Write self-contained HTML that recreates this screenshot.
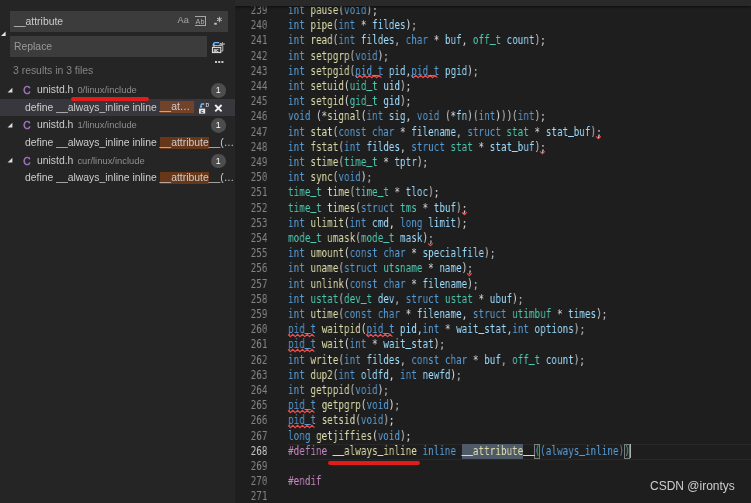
<!DOCTYPE html>
<html><head><meta charset="utf-8"><title>unistd.h</title>
<style>
html,body{margin:0;padding:0;}
body{width:751px;height:503px;overflow:hidden;background:#1e1e1e;position:relative;font-family:"Liberation Sans",sans-serif;}
#side{position:absolute;left:0;top:0;width:235px;height:503px;background:#252526;overflow:hidden;color:#cccccc;font-size:10.4px;}
#ed{position:absolute;left:235px;top:0;width:516px;height:503px;background:#1e1e1e;overflow:hidden;}
#topbar{position:absolute;left:0;top:0;width:516px;height:5.5px;background:#292929;z-index:5;box-shadow:0 1px 3px rgba(0,0,0,.6);}
.ln{position:absolute;left:0;width:32.5px;text-align:right;color:#858585;height:15.2px;line-height:15.2px;}
.ln.a{color:#c6c6c6;}
#nums{position:absolute;left:0;top:0;width:40px;height:503px;font-family:"DejaVu Sans Mono","Liberation Mono",monospace;font-size:12px;transform:scaleX(.7752);transform-origin:32.5px 0;will-change:transform;}
#code{position:absolute;left:53px;top:0;width:600px;height:503px;font-family:"DejaVu Sans Mono","Liberation Mono",monospace;font-size:12px;color:#d4d4d4;transform:scaleX(.7752);transform-origin:0 0;white-space:pre;will-change:transform;}
.cl{position:absolute;left:0;height:15.2px;line-height:15.2px;white-space:pre;}
.u{position:relative;top:-1.5px;-webkit-text-stroke:0.55px}
.k{color:#569cd6}.t{color:#4ec9b0}.f{color:#dcdcaa}.v{color:#9cdcfe}.m{color:#c586c0}
#ov{position:absolute;left:0;top:0;width:516px;height:503px;}
.sqg{position:absolute;overflow:visible}
.curline{position:absolute;left:53px;width:463px;height:14.2px;border-top:1px solid #282828;border-bottom:1px solid #282828;box-sizing:content-box}
.selbox{position:absolute;height:14.2px;background:#4f5a68;margin-top:0.3px}
.brbox{position:absolute;height:14.4px;width:5.8px;box-sizing:border-box;border:1px solid #7c7c7c;background:#1c2a1c;margin-top:0.3px}
.cursor{position:absolute;height:14.2px;width:1.5px;background:#aeafad}
.inp{position:absolute;background:#3c3c3c;height:21px;line-height:21px;}
.row{position:absolute;left:0;width:235px;height:17.6px;line-height:17.6px;white-space:nowrap;}
.badge{position:absolute;left:211px;top:2px;width:14.6px;height:14.6px;border-radius:7.3px;background:#4d4d4d;color:#fff;font-size:8.8px;line-height:14.6px;text-align:center;}
.hl{background:#663719;padding:0.4px 0 0.6px 0;}
.desc{font-size:9.4px;color:#8f8f8f;margin-left:4px;}
.tw{position:absolute;left:7.3px;top:5.6px;}
#sidein{position:absolute;left:0;top:0;width:235px;height:503px;will-change:transform;}
.lbl{position:absolute;left:37px}
.mt{position:absolute;left:25px}
.ci{position:absolute;left:23.2px;top:1px;color:#a074c4;font-size:10.2px;-webkit-text-stroke:0.45px #a074c4;}
.redline{position:absolute;background:#e21b1b;border-radius:2px;}
</style></head><body>
<div id="side"><div id="sidein">
  <svg style="position:absolute;left:0;top:30px" width="7" height="7" viewBox="0 0 7 7"><path d="M1 6 L5.6 6 L5.6 1.4 Z" fill="#e4e4e4"/></svg>
  <div class="inp" style="left:10px;top:11px;width:218px;"><span style="position:absolute;left:4px;">__attribute</span>
    <span style="position:absolute;left:167.5px;top:-0.8px;font-size:9.2px;color:#a9a9a9;letter-spacing:0.1px">Aa</span>
    <span style="position:absolute;left:185px;top:5px;width:11px;height:8px;border-top:1px solid #a6a6a6;border-bottom:1px solid #a6a6a6;"></span>
    <span style="position:absolute;left:185.6px;top:0.4px;font-size:7.2px;color:#b0b0b0">Ab</span>
    <span style="position:absolute;left:195px;top:6.4px;width:1px;height:7.4px;background:#a8a8a8"></span>
    <svg style="position:absolute;left:203px;top:5px" width="11" height="11" viewBox="0 0 11 11"><rect x="1.2" y="6.8" width="2.6" height="1.9" fill="#c0c0c0"/><g stroke="#c0c0c0" stroke-width="1" stroke-linecap="butt"><path d="M6.4 0.8 L6.4 6.2"/><path d="M4 2.2 L8.8 4.8"/><path d="M8.8 2.2 L4 4.8"/></g></svg>
  </div>
  <div class="inp" style="left:10px;top:36px;width:197px;"><span style="position:absolute;left:4px;color:#9a9a9a">Replace</span></div>
  <svg style="position:absolute;left:211px;top:40px" width="14" height="14" viewBox="0 0 14 14">
    <path d="M8.2 2.6 L4.2 2.6 Q2.6 2.6 2.6 4.4 L2.6 5.6" fill="none" stroke="#75beff" stroke-width="1.3"/><path d="M1 4.6 L2.6 6.8 L4.2 4.6 Z" fill="#75beff"/>
    <text x="8.6" y="4.6" font-family="Liberation Sans,sans-serif" font-size="4.4" font-weight="bold" fill="#e8e8e8">ab</text>
    <path d="M3 7 L3 5.6 L11.8 5.6 L11.8 11 L10.2 11" fill="none" stroke="#c8c8c8" stroke-width="0.9"/>
    <rect x="1.4" y="7.4" width="8.4" height="5.2" fill="#3a3a3a" stroke="#e8e8e8" stroke-width="1"/>
    <text x="2.4" y="11.6" font-family="Liberation Sans,sans-serif" font-size="4.6" font-weight="bold" fill="#e8e8e8">ac</text>
  </svg>
  <div style="position:absolute;left:214.7px;top:61px;width:2.2px;height:2.2px;background:#c8c8c8;box-shadow:3.2px 0 0 #c8c8c8,6.4px 0 0 #c8c8c8"></div>
  <div style="position:absolute;left:13px;top:63px;height:16px;line-height:16px;color:#858585">3 results in 3 files</div>

  <div class="row" style="top:81.2px"><svg class="tw" width="7" height="7" viewBox="0 0 7 7"><path d="M0.6 5.6 L5.4 5.6 L5.4 0.8 Z" fill="#dcdcdc"/></svg><span class="ci">C</span><span class="lbl">unistd.h<span class="desc">0/linux/include</span></span><div class="badge">1</div></div>
  <div class="row" style="top:98.8px;background:#37373d"><span class="mt">define __always_inline inline <span class="hl" style="background:#724329;padding-right:3.6px">__at…</span></span>
    <svg style="position:absolute;left:198px;top:4px" width="12" height="12" viewBox="0 0 12 12">
      <path d="M6.2 1 L4.2 1 Q3 1 3 2.4 L3 3.4" fill="none" stroke="#75beff" stroke-width="1.3"/><rect x="1.9" y="3" width="2.2" height="1.6" fill="#75beff"/>
      <text x="7.4" y="4.4" font-family="Liberation Sans,sans-serif" font-size="6.4" fill="#f0f0f0">b</text>
      <rect x="1" y="5.6" width="6.2" height="5" fill="#e6e6e6"/>
      <text x="2.4" y="10" font-family="Liberation Sans,sans-serif" font-size="5.4" font-weight="bold" fill="#37373d">c</text>
    </svg>
    <svg style="position:absolute;left:214px;top:5.6px" width="9" height="9" viewBox="0 0 9 9"><path d="M1.2 1 L7.6 7.4 M7.6 1 L1.2 7.4" stroke="#f0f0f0" stroke-width="1.9" fill="none"/></svg>
  </div>
  <div class="row" style="top:116.4px"><svg class="tw" width="7" height="7" viewBox="0 0 7 7"><path d="M0.6 5.6 L5.4 5.6 L5.4 0.8 Z" fill="#dcdcdc"/></svg><span class="ci">C</span><span class="lbl">unistd.h<span class="desc">1/linux/include</span></span><div class="badge">1</div></div>
  <div class="row" style="top:134px"><span class="mt">define __always_inline inline <span class="hl">__attribute</span>__(…</span></div>
  <div class="row" style="top:151.6px"><svg class="tw" width="7" height="7" viewBox="0 0 7 7"><path d="M0.6 5.6 L5.4 5.6 L5.4 0.8 Z" fill="#dcdcdc"/></svg><span class="ci">C</span><span class="lbl">unistd.h<span class="desc">cur/linux/include</span></span><div class="badge">1</div></div>
  <div class="row" style="top:169.2px"><span class="mt">define __always_inline inline <span class="hl">__attribute</span>__(…</span></div>
  <div class="redline" style="left:71.2px;top:97px;width:78.3px;height:4px"></div>
</div></div>
<div id="ed">
  <div id="topbar"></div>
  <div id="ov">
<svg class="sqg" style="left:120.2px;top:75.4px" width="28.0" height="3" viewBox="0 0 28.0 3"><polyline points="0.0,0.4 2.4,2.6 4.8,0.4 7.2,2.6 9.6,0.4 12.0,2.6 14.4,0.4 16.8,2.6 19.2,0.4 21.6,2.6 24.0,0.4 26.4,2.6" fill="none" stroke="#f14c4c" stroke-width="1.15"/></svg>
<svg class="sqg" style="left:176.2px;top:75.4px" width="28.0" height="3" viewBox="0 0 28.0 3"><polyline points="0.0,0.4 2.4,2.6 4.8,0.4 7.2,2.6 9.6,0.4 12.0,2.6 14.4,0.4 16.8,2.6 19.2,0.4 21.6,2.6 24.0,0.4 26.4,2.6" fill="none" stroke="#f14c4c" stroke-width="1.15"/></svg>
<svg class="sqg" style="left:361.0px;top:136.2px" width="5.6" height="3" viewBox="0 0 5.6 3"><polyline points="0.0,0.4 2.4,2.6 4.8,0.4" fill="none" stroke="#f14c4c" stroke-width="1.15"/></svg>
<svg class="sqg" style="left:305.0px;top:151.4px" width="5.6" height="3" viewBox="0 0 5.6 3"><polyline points="0.0,0.4 2.4,2.6 4.8,0.4" fill="none" stroke="#f14c4c" stroke-width="1.15"/></svg>
<svg class="sqg" style="left:226.6px;top:212.2px" width="5.6" height="3" viewBox="0 0 5.6 3"><polyline points="0.0,0.4 2.4,2.6 4.8,0.4" fill="none" stroke="#f14c4c" stroke-width="1.15"/></svg>
<svg class="sqg" style="left:193.0px;top:242.6px" width="5.6" height="3" viewBox="0 0 5.6 3"><polyline points="0.0,0.4 2.4,2.6 4.8,0.4" fill="none" stroke="#f14c4c" stroke-width="1.15"/></svg>
<svg class="sqg" style="left:232.2px;top:273.0px" width="5.6" height="3" viewBox="0 0 5.6 3"><polyline points="0.0,0.4 2.4,2.6 4.8,0.4" fill="none" stroke="#f14c4c" stroke-width="1.15"/></svg>
<svg class="sqg" style="left:53.0px;top:333.8px" width="28.0" height="3" viewBox="0 0 28.0 3"><polyline points="0.0,0.4 2.4,2.6 4.8,0.4 7.2,2.6 9.6,0.4 12.0,2.6 14.4,0.4 16.8,2.6 19.2,0.4 21.6,2.6 24.0,0.4 26.4,2.6" fill="none" stroke="#f14c4c" stroke-width="1.15"/></svg>
<svg class="sqg" style="left:131.4px;top:333.8px" width="28.0" height="3" viewBox="0 0 28.0 3"><polyline points="0.0,0.4 2.4,2.6 4.8,0.4 7.2,2.6 9.6,0.4 12.0,2.6 14.4,0.4 16.8,2.6 19.2,0.4 21.6,2.6 24.0,0.4 26.4,2.6" fill="none" stroke="#f14c4c" stroke-width="1.15"/></svg>
<svg class="sqg" style="left:53.0px;top:349.0px" width="28.0" height="3" viewBox="0 0 28.0 3"><polyline points="0.0,0.4 2.4,2.6 4.8,0.4 7.2,2.6 9.6,0.4 12.0,2.6 14.4,0.4 16.8,2.6 19.2,0.4 21.6,2.6 24.0,0.4 26.4,2.6" fill="none" stroke="#f14c4c" stroke-width="1.15"/></svg>
<svg class="sqg" style="left:53.0px;top:409.8px" width="28.0" height="3" viewBox="0 0 28.0 3"><polyline points="0.0,0.4 2.4,2.6 4.8,0.4 7.2,2.6 9.6,0.4 12.0,2.6 14.4,0.4 16.8,2.6 19.2,0.4 21.6,2.6 24.0,0.4 26.4,2.6" fill="none" stroke="#f14c4c" stroke-width="1.15"/></svg>
<svg class="sqg" style="left:53.0px;top:425.0px" width="28.0" height="3" viewBox="0 0 28.0 3"><polyline points="0.0,0.4 2.4,2.6 4.8,0.4 7.2,2.6 9.6,0.4 12.0,2.6 14.4,0.4 16.8,2.6 19.2,0.4 21.6,2.6 24.0,0.4 26.4,2.6" fill="none" stroke="#f14c4c" stroke-width="1.15"/></svg>
<div class="curline" style="top:443.6px"></div>
<div class="selbox" style="left:226.6px;top:444.2px;width:61.6px"></div>
<div class="brbox" style="left:299.4px;top:444.2px"></div>
<div class="brbox" style="left:389.0px;top:444.2px"></div>
<div class="cursor" style="left:394.6px;top:444.2px"></div>
  </div>
  <div id="nums">
<div class="ln" style="top:2.8px">239</div>
<div class="ln" style="top:17.8px">240</div>
<div class="ln" style="top:32.8px">241</div>
<div class="ln" style="top:48.8px">242</div>
<div class="ln" style="top:63.8px">243</div>
<div class="ln" style="top:78.8px">244</div>
<div class="ln" style="top:93.8px">245</div>
<div class="ln" style="top:108.8px">246</div>
<div class="ln" style="top:124.8px">247</div>
<div class="ln" style="top:139.8px">248</div>
<div class="ln" style="top:154.8px">249</div>
<div class="ln" style="top:169.8px">250</div>
<div class="ln" style="top:184.8px">251</div>
<div class="ln" style="top:200.8px">252</div>
<div class="ln" style="top:215.8px">253</div>
<div class="ln" style="top:230.8px">254</div>
<div class="ln" style="top:245.8px">255</div>
<div class="ln" style="top:260.8px">256</div>
<div class="ln" style="top:276.8px">257</div>
<div class="ln" style="top:291.8px">258</div>
<div class="ln" style="top:306.8px">259</div>
<div class="ln" style="top:321.8px">260</div>
<div class="ln" style="top:336.8px">261</div>
<div class="ln" style="top:352.8px">262</div>
<div class="ln" style="top:367.8px">263</div>
<div class="ln" style="top:382.8px">264</div>
<div class="ln" style="top:397.8px">265</div>
<div class="ln" style="top:412.8px">266</div>
<div class="ln" style="top:428.8px">267</div>
<div class="ln a" style="top:443.8px">268</div>
<div class="ln" style="top:458.8px">269</div>
<div class="ln" style="top:473.8px">270</div>
<div class="ln" style="top:488.8px">271</div>
  </div>
  <div id="code">
<div class="cl" style="top:2.8px"><span class="k">int</span> <span class="f">pause</span>(<span class="k">void</span>);</div>
<div class="cl" style="top:17.8px"><span class="k">int</span> <span class="f">pipe</span>(<span class="k">int</span> * <span class="v">fildes</span>);</div>
<div class="cl" style="top:32.8px"><span class="k">int</span> <span class="f">read</span>(<span class="k">int</span> <span class="v">fildes</span>, <span class="k">char</span> * <span class="v">buf</span>, <span class="t">off<span class="u">_</span>t</span> <span class="v">count</span>);</div>
<div class="cl" style="top:48.8px"><span class="k">int</span> <span class="f">setpgrp</span>(<span class="k">void</span>);</div>
<div class="cl" style="top:63.8px"><span class="k">int</span> <span class="f">setpgid</span>(<span class="k sq">pid<span class="u">_</span>t</span> <span class="v">pid</span>,<span class="k sq">pid<span class="u">_</span>t</span> <span class="v">pgid</span>);</div>
<div class="cl" style="top:78.8px"><span class="k">int</span> <span class="f">setuid</span>(<span class="t">uid<span class="u">_</span>t</span> <span class="v">uid</span>);</div>
<div class="cl" style="top:93.8px"><span class="k">int</span> <span class="f">setgid</span>(<span class="t">gid<span class="u">_</span>t</span> <span class="v">gid</span>);</div>
<div class="cl" style="top:108.8px"><span class="k">void</span> (*<span class="f">signal</span>(<span class="k">int</span> <span class="v">sig</span>, <span class="k">void</span> (*<span class="v">fn</span>)(<span class="k">int</span>)))(<span class="k">int</span>);</div>
<div class="cl" style="top:124.8px"><span class="k">int</span> <span class="f">stat</span>(<span class="k">const</span> <span class="k">char</span> * <span class="v">filename</span>, <span class="k">struct</span> <span class="t">stat</span> * <span class="v">stat<span class="u">_</span>buf</span>)<span class="sq2">;</span></div>
<div class="cl" style="top:139.8px"><span class="k">int</span> <span class="f">fstat</span>(<span class="k">int</span> <span class="v">fildes</span>, <span class="k">struct</span> <span class="t">stat</span> * <span class="v">stat<span class="u">_</span>buf</span>)<span class="sq2">;</span></div>
<div class="cl" style="top:154.8px"><span class="k">int</span> <span class="f">stime</span>(<span class="t">time<span class="u">_</span>t</span> * <span class="v">tptr</span>);</div>
<div class="cl" style="top:169.8px"><span class="k">int</span> <span class="f">sync</span>(<span class="k">void</span>);</div>
<div class="cl" style="top:184.8px"><span class="t">time<span class="u">_</span>t</span> <span class="f">time</span>(<span class="t">time<span class="u">_</span>t</span> * <span class="v">tloc</span>);</div>
<div class="cl" style="top:200.8px"><span class="t">time<span class="u">_</span>t</span> <span class="f">times</span>(<span class="k">struct</span> <span class="t">tms</span> * <span class="v">tbuf</span>)<span class="sq2">;</span></div>
<div class="cl" style="top:215.8px"><span class="k">int</span> <span class="f">ulimit</span>(<span class="k">int</span> <span class="v">cmd</span>, <span class="k">long</span> <span class="v">limit</span>);</div>
<div class="cl" style="top:230.8px"><span class="t">mode<span class="u">_</span>t</span> <span class="f">umask</span>(<span class="t">mode<span class="u">_</span>t</span> <span class="v">mask</span>)<span class="sq2">;</span></div>
<div class="cl" style="top:245.8px"><span class="k">int</span> <span class="f">umount</span>(<span class="k">const</span> <span class="k">char</span> * <span class="v">specialfile</span>);</div>
<div class="cl" style="top:260.8px"><span class="k">int</span> <span class="f">uname</span>(<span class="k">struct</span> <span class="t">utsname</span> * <span class="v">name</span>)<span class="sq2">;</span></div>
<div class="cl" style="top:276.8px"><span class="k">int</span> <span class="f">unlink</span>(<span class="k">const</span> <span class="k">char</span> * <span class="v">filename</span>);</div>
<div class="cl" style="top:291.8px"><span class="k">int</span> <span class="t">ustat</span>(<span class="t">dev<span class="u">_</span>t</span> <span class="v">dev</span>, <span class="k">struct</span> <span class="t">ustat</span> * <span class="v">ubuf</span>);</div>
<div class="cl" style="top:306.8px"><span class="k">int</span> <span class="f">utime</span>(<span class="k">const</span> <span class="k">char</span> * <span class="v">filename</span>, <span class="k">struct</span> <span class="t">utimbuf</span> * <span class="v">times</span>);</div>
<div class="cl" style="top:321.8px"><span class="k sq">pid<span class="u">_</span>t</span> <span class="f">waitpid</span>(<span class="k sq">pid<span class="u">_</span>t</span> <span class="v">pid</span>,<span class="k">int</span> * <span class="v">wait<span class="u">_</span>stat</span>,<span class="k">int</span> <span class="v">options</span>);</div>
<div class="cl" style="top:336.8px"><span class="k sq">pid<span class="u">_</span>t</span> <span class="f">wait</span>(<span class="k">int</span> * <span class="v">wait<span class="u">_</span>stat</span>);</div>
<div class="cl" style="top:352.8px"><span class="k">int</span> <span class="f">write</span>(<span class="k">int</span> <span class="v">fildes</span>, <span class="k">const</span> <span class="k">char</span> * <span class="v">buf</span>, <span class="t">off<span class="u">_</span>t</span> <span class="v">count</span>);</div>
<div class="cl" style="top:367.8px"><span class="k">int</span> <span class="f">dup2</span>(<span class="k">int</span> <span class="v">oldfd</span>, <span class="k">int</span> <span class="v">newfd</span>);</div>
<div class="cl" style="top:382.8px"><span class="k">int</span> <span class="f">getppid</span>(<span class="k">void</span>);</div>
<div class="cl" style="top:397.8px"><span class="k sq">pid<span class="u">_</span>t</span> <span class="f">getpgrp</span>(<span class="k">void</span>);</div>
<div class="cl" style="top:412.8px"><span class="k sq">pid<span class="u">_</span>t</span> <span class="f">setsid</span>(<span class="k">void</span>);</div>
<div class="cl" style="top:428.8px"><span class="k">long</span> <span class="f">getjiffies</span>(<span class="k">void</span>);</div>
<div class="cl" style="top:443.8px"><span class="m">#define</span> <span class="f"><span class="u">_</span><span class="u">_</span>always<span class="u">_</span>inline</span> <span class="k">inline</span> <span class="f"><span class="u">_</span><span class="u">_</span>attribute<span class="u">_</span><span class="u">_</span></span><span class="k">((always<span class="u">_</span>inline))</span></div>
<div class="cl" style="top:458.8px"></div>
<div class="cl" style="top:473.8px"><span class="m">#endif</span></div>
<div class="cl" style="top:488.8px"></div>
  </div>
  <div class="redline" style="left:93.2px;top:460.8px;width:91.7px;height:4.3px"></div>
  <div style="position:absolute;left:414.8px;top:478px;font-size:12px;color:#cdcdcd;line-height:16px;will-change:transform">CSDN @irontys</div>
</div>
</body></html>
